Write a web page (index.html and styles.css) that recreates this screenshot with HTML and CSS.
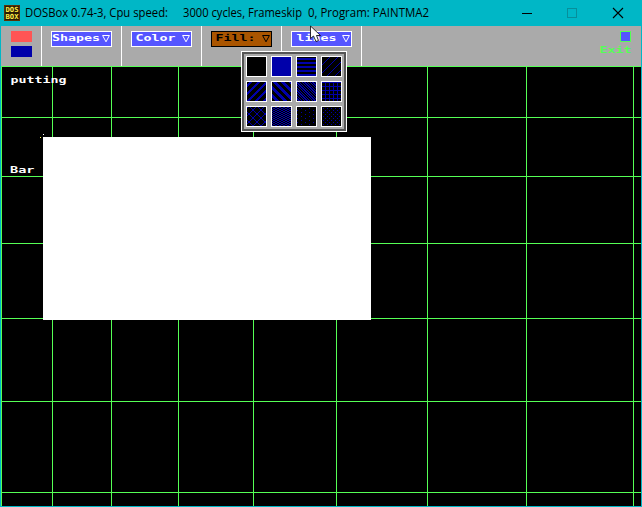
FILE: index.html
```html
<!DOCTYPE html>
<html lang="en">
<head>
<meta charset="utf-8">
<title>DOSBox 0.74-3</title>
<link rel="stylesheet" href="styles.css">
</head>
<body>
<div class="window">
  <header class="titlebar">
    <svg class="logo" viewBox="0 0 16 16" width="16" height="16">
      <rect width="16" height="16" fill="#5a3205"/>
      <rect x="1" y="1" width="14" height="14" fill="#291b05"/>
      <g class="logo-text"><text x="1.5" y="7.2" textLength="13" lengthAdjust="spacingAndGlyphs">DOS</text><text x="1.5" y="14.2" textLength="13" lengthAdjust="spacingAndGlyphs">BOX</text></g>
    </svg>
    <svg class="caption" width="410" height="26">
      <text x="0" y="17" textLength="143" lengthAdjust="spacingAndGlyphs">DOSBox 0.74-3, Cpu speed:</text>
      <text x="158" y="17" textLength="119" lengthAdjust="spacingAndGlyphs">3000 cycles, Frameskip</text>
      <text x="283" y="17" textLength="121" lengthAdjust="spacingAndGlyphs">0, Program: PAINTMA2</text>
    </svg>
    <div class="controls">
      <svg width="10" height="10" shape-rendering="crispEdges"><path d="M0 5.5H10" stroke="#000"/></svg>
      <svg width="10" height="10" shape-rendering="crispEdges"><rect x=".5" y=".5" width="9" height="9" fill="none" stroke="#078f9b"/></svg>
      <svg class="close" width="10" height="10"><path d="M0 0L10 10M10 0L0 10" stroke="#000" stroke-width="1.1"/></svg>
    </div>
  </header>

  <nav class="toolbar">
    <div class="swatches"><i class="swatch red"></i><i class="swatch blue"></i></div>
    <div class="slot"><button class="menu"><svg width="59" height="14"><text x="0" y="9" textLength="48" lengthAdjust="spacingAndGlyphs">Shapes</text><path class="arrow" d="M50.6 3.5H57.4L54 9.8Z"/></svg></button></div>
    <div class="slot"><button class="menu"><svg width="59" height="14"><text x="3.5" y="9" textLength="40" lengthAdjust="spacingAndGlyphs">Color</text><path class="arrow" d="M50.6 3.5H57.4L54 9.8Z"/></svg></button></div>
    <div class="slot"><button class="menu active"><svg width="59" height="14"><text x="3.5" y="9" textLength="40" lengthAdjust="spacingAndGlyphs">Fill:</text><path class="arrow" d="M50.6 3.5H57.4L54 9.8Z"/></svg></button></div>
    <div class="slot"><button class="menu"><svg width="59" height="14"><text x="4.5" y="9" textLength="40" lengthAdjust="spacingAndGlyphs">lines</text><path class="arrow" d="M50.6 3.5H57.4L54 9.8Z"/></svg></button></div>
    <div class="exit"><i class="exit-box"></i><svg width="33" height="12"><text x="1.5" y="9" textLength="32" lengthAdjust="spacingAndGlyphs">Exit</text></svg></div>
  </nav>

  <main class="canvas">
    <svg width="640" height="440" shape-rendering="crispEdges">
      <path class="grid" d="M0 .5H640M0 51.5H640M0 110.5H640M0 177.5H640M0 252.5H640M0 335.5H640M0 426.5H640M.5 0V440M51.5 0V440M110.5 0V440M177.5 0V440M252.5 0V440M335.5 0V440M426.5 0V440M525.5 0V440M632.5 0V440"/>
      <rect x="42" y="71" width="328" height="183" fill="#fff"/>
      <rect x="39" y="71" width="1" height="1" fill="#ff5"/>
      <rect x="42" y="68" width="1" height="1" fill="#fff"/>
      <text x="9.5" y="17" textLength="56" lengthAdjust="spacingAndGlyphs">putting</text>
      <text x="9" y="107" textLength="24.5" lengthAdjust="spacingAndGlyphs">Bar</text>
    </svg>
  </main>

  <div class="fills"></div>

  <svg class="cursor" width="12" height="17" viewBox="0 0 12 17"><path d="M.5 0V12.5L3.5 10L6 15.5L8.5 14.5L6.5 9.5H10.5Z" fill="#fff" stroke="#000" stroke-width=".8"/></svg>
</div>
<script src="fills.js"></script>
</body>
</html>
```
FILE: fills.js
```js
// Each fill style is an 8x8 bitmap, one byte per row, tiled from the screen origin.
const patterns = [
  "0000000000000000", "ffffffffffffffff", "ffff0000ffff0000", "0102040810204080",
  "e0c183070e1c3870", "f0783c1e0f87c3e1", "a5d269b45a2d964b", "ff888888ff888888",
  "8142241818244281", "cc33cc33cc33cc33", "8000080080000800", "8800220088002200"
];
const SIZE = 19;
const panel = document.querySelector(".fills");

patterns.forEach((hex, i) => {
  const x0 = 246 + 25 * (i % 4);
  const y0 = 31 + 25 * Math.floor(i / 4);
  let d = "";
  for (let y = 0; y < SIZE; y++) {
    const row = (y0 + y) % 8;
    const bits = parseInt(hex.slice(row * 2, row * 2 + 2), 16);
    for (let x = 0; x < SIZE; x++) {
      if (bits & (0x80 >> ((x0 + x) % 8))) d += `M${x} ${y}h1v1h-1z`;
    }
  }
  panel.insertAdjacentHTML("beforeend",
    `<i class="fill"><svg width="${SIZE}" height="${SIZE}" shape-rendering="crispEdges"><path d="${d}"/></svg></i>`);
});
```
FILE: styles.css
```css
* { box-sizing: border-box; }
body { margin: 0; background: #00b7c3; overflow: hidden; }
svg { display: block; overflow: visible; }
.window { position: relative; width: 642px; height: 507px; padding: 0 1px 1px; background: #00b7c6; }
.titlebar { display: flex; align-items: center; height: 26px; padding-left: 3px; }
.logo-text { font: bold 7px "DejaVu Sans Mono", monospace; fill: #ffed45; }
.caption { margin-left: 5px; font: 12.3px "Open Sans", sans-serif; fill: #000; }
.controls { display: flex; gap: 35px; margin-left: 87px; }
.close { margin-left: 1px; }
.toolbar { display: flex; height: 40px; background: #aaa; }
.toolbar, .canvas { font: bold 9.5px "DejaVu Sans Mono", monospace; }
.swatches { display: flex; flex-direction: column; gap: 4px; width: 41px; padding: 5px 0 0 10px; border-right: 1px solid #fff; }
.swatch { width: 21px; height: 11px; }
.red { background: #f55; }
.blue { background: #00a; }
.slot { width: 80px; padding: 5px 0 0 9px; border-right: 1px solid #fff; }
.menu { display: block; width: 61px; height: 16px; padding: 0; border: 1px solid #fff; background: #55f; color: #fff; font: inherit; }
.menu.active { border-color: #000; background: #a50; color: #000; }
.menu text { fill: currentColor; }
.arrow { fill: none; stroke: currentColor; }
.exit { display: flex; flex-direction: column; align-items: flex-end; gap: 2px; margin-left: auto; padding: 5px 10px 0 0; }
.exit-box { width: 11px; height: 11px; border: 1px solid #5f5; background: #55f; }
.exit text { fill: #5f5; }
.canvas { height: 440px; background: #000; }
.canvas text { fill: #fff; }
.grid { fill: none; stroke: #5f5; }
.fills { position: absolute; left: 241px; top: 51px; display: grid; grid-template-columns: repeat(4, 21px); gap: 4px; width: 106px; height: 81px; padding: 4px; border: 1px solid #fff; outline: 2px solid #555; outline-offset: -3px; background: #aaa; }
.fill { width: 21px; height: 21px; border: 1px solid #fff; background: #000; }
.fill path { fill: #00a; }
.cursor { position: absolute; left: 310px; top: 26px; }
```
